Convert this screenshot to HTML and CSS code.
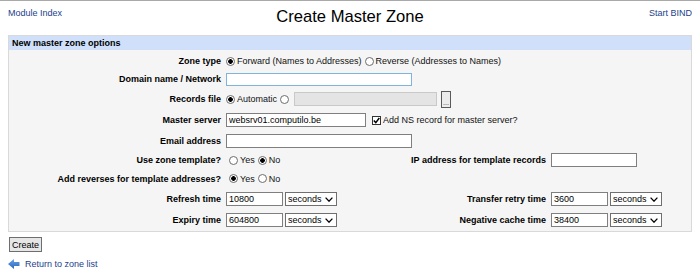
FILE: index.html
```html
<!DOCTYPE html>
<html>
<head>
<meta charset="utf-8">
<title>Create Master Zone</title>
<link rel="stylesheet" href="styles.css">
</head>
<body>
<div class="topbar">
  <div class="side"><a href="#">Module Index</a></div>
  <h1 class="title">Create Master Zone</h1>
  <div class="side right"><a href="#">Start BIND</a></div>
</div>
<form class="panel">
  <div class="panel-head">New master zone options</div>
  <div class="grid">
    <span class="lbl">Zone type</span>
    <div class="val span"><input type="radio" name="rev" checked><span>Forward (Names to Addresses)</span><input type="radio" name="rev" class="next"><span>Reverse (Addresses to Names)</span></div>

    <span class="lbl">Domain name / Network</span>
    <div class="val span"><input type="text" class="txt w-domain focus"></div>

    <span class="lbl">Records file</span>
    <div class="val span"><input type="radio" name="file" checked><span>Automatic</span><input type="radio" name="file" class="next"><input type="text" class="txt disabled" disabled><button type="button" class="dots">...</button></div>

    <span class="lbl">Master server</span>
    <div class="val span"><input type="text" class="txt w-master" value="websrv01.computilo.be"><input type="checkbox" checked><span>Add NS record for master server?</span></div>

    <span class="lbl">Email address</span>
    <div class="val span"><input type="text" class="txt w-domain"></div>

    <span class="lbl">Use zone template?</span>
    <div class="val yn"><input type="radio" name="tmpl"><span>Yes</span><input type="radio" name="tmpl" class="next" checked><span>No</span></div>
    <span class="lbl">IP address for template records</span>
    <div class="val"><input type="text" class="txt w-ip"></div>

    <span class="lbl">Add reverses for template addresses?</span>
    <div class="val yn"><input type="radio" name="revs" checked><span>Yes</span><input type="radio" name="revs" class="next"><span>No</span></div>
    <span></span><span></span>

    <span class="lbl">Refresh time</span>
    <div class="val"><input type="text" class="txt w-num" value="10800"><select class="unit"><option>seconds</option></select></div>
    <span class="lbl">Transfer retry time</span>
    <div class="val"><input type="text" class="txt w-num" value="3600"><select class="unit"><option>seconds</option></select></div>

    <span class="lbl">Expiry time</span>
    <div class="val"><input type="text" class="txt w-num" value="604800"><select class="unit"><option>seconds</option></select></div>
    <span class="lbl">Negative cache time</span>
    <div class="val"><input type="text" class="txt w-num" value="38400"><select class="unit"><option>seconds</option></select></div>
  </div>
</form>
<button type="button" class="create">Create</button>
<div class="back">
  <svg class="arrow" width="12" height="10" viewBox="0 0 12 10" aria-hidden="true">
    <defs><linearGradient id="ag" x1="0" y1="0" x2="0" y2="1"><stop offset="0" stop-color="#6aa3e8"/><stop offset="1" stop-color="#2a66c0"/></linearGradient></defs>
    <polygon points="0,5 6,0 6,3 11.5,3 11.5,7 6,7 6,10" fill="url(#ag)"/>
  </svg>
  <a href="#">Return to zone list</a>
</div>
</body>
</html>
```

FILE: styles.css
```css
html {
  border-top: 1px solid #a9a9a9;
  background: #fff;
}
body {
  margin: 0 8px;
  font-family: "Liberation Sans", Arial, sans-serif;
  font-size: 9px;
  color: #111;
}
a {
  color: #23418c;
  text-decoration: none;
}
.topbar {
  display: grid;
  grid-template-columns: 1fr auto 1fr;
  align-items: start;
  padding-top: 6px;
  height: 28px;
}
.side {
  line-height: 11px;
  padding-top: 1px;
}
.side.right {
  text-align: right;
}
.title {
  margin: 0;
  font-weight: normal;
  font-size: 16.6px;
  line-height: 20px;
  color: #000;
}
.panel {
  margin: 0;
  border: 1px solid #d9d9d9;
  background: #f5f5f5;
}
.panel-head {
  background: #d0e0fb;
  font-weight: bold;
  height: 14px;
  line-height: 14px;
  padding-left: 3px;
  color: #000;
}
.grid {
  display: grid;
  grid-template-columns: 212px 170px 145px 1fr;
  grid-template-rows: 18px 18px 22px 20px 21px 18px 19px 22px 20px;
  column-gap: 5px;
  padding: 2px 0 1px;
  align-items: center;
}
.lbl {
  text-align: right;
  font-weight: bold;
  color: #000;
  white-space: nowrap;
}
.val {
  display: flex;
  align-items: center;
  white-space: nowrap;
}
.val.span {
  grid-column: 2 / -1;
}
.val.yn {
  padding-left: 3px;
}
input[type=radio] {
  appearance: none;
  -webkit-appearance: none;
  box-sizing: border-box;
  width: 9px;
  height: 9px;
  margin: 0 2px 0 0;
  border: 1px solid #6d6d6d;
  border-radius: 50%;
  background: #fff;
}
input[type=radio]:checked {
  background: radial-gradient(circle, #000 0 2px, #fff 2.6px);
}
input[type=radio].next {
  margin-left: 3px;
}
input[type=checkbox] {
  appearance: none;
  -webkit-appearance: none;
  box-sizing: border-box;
  width: 9px;
  height: 9px;
  margin: 0 2px 0 6px;
  border: 1px solid #333;
  background: #fff url("data:image/svg+xml;utf8,<svg xmlns='http://www.w3.org/2000/svg' width='7' height='7'><path d='M0.8 3.4 L2.8 5.6 L6.3 1' fill='none' stroke='%23000' stroke-width='1.5'/></svg>") center / 7px 7px no-repeat;
}
.txt {
  box-sizing: border-box;
  height: 14px;
  margin: 0;
  padding: 0 2px;
  border: 1px solid #7f7f7f;
  background: #fff;
  font-family: inherit;
  font-size: 9px;
  color: #000;
  outline: none;
}
.txt.focus {
  border-color: #7fb4dc;
  height: 13px;
}
.w-domain {
  width: 186px;
}
.w-master {
  width: 140px;
}
.w-ip {
  width: 86px;
}
.w-num {
  width: 57px;
}
.txt.disabled {
  width: 143px;
  margin-left: 3px;
  background: #e4e4e4;
  border-color: #c9c9c9;
}
.dots {
  box-sizing: border-box;
  width: 10px;
  height: 17px;
  margin: 0 0 0 4px;
  padding: 0 0 1px;
  border: 1px solid #5a5a5a;
  background: #ececec;
  font-family: inherit;
  font-size: 7px;
  line-height: 7px;
  color: #333;
  display: flex;
  align-items: flex-end;
  justify-content: center;
}
.unit {
  appearance: none;
  -webkit-appearance: none;
  box-sizing: border-box;
  width: 52px;
  height: 14px;
  margin: 0 0 0 2px;
  padding: 0 0 0 2px;
  border: 1px solid #6f6f6f;
  border-radius: 0;
  background: #fff url("data:image/svg+xml;utf8,<svg xmlns='http://www.w3.org/2000/svg' width='8' height='5'><path d='M0.6 0.6 L4 4.2 L7.4 0.6' fill='none' stroke='%23000' stroke-width='1.3'/></svg>") right 3px center / 8px 5px no-repeat;
  font-family: inherit;
  font-size: 9px;
  color: #000;
}
.create {
  display: block;
  box-sizing: border-box;
  height: 15px;
  margin: 5px 0 0 1px;
  padding: 0 2px;
  border: 1px solid #6e6e6e;
  border-radius: 0;
  background: #e6e6e6;
  font-family: inherit;
  font-size: 9px;
  line-height: 12px;
  color: #000;
}
.back {
  display: flex;
  align-items: center;
  gap: 5px;
  margin-top: 6px;
  line-height: 12px;
}
.arrow {
  display: block;
}
```
